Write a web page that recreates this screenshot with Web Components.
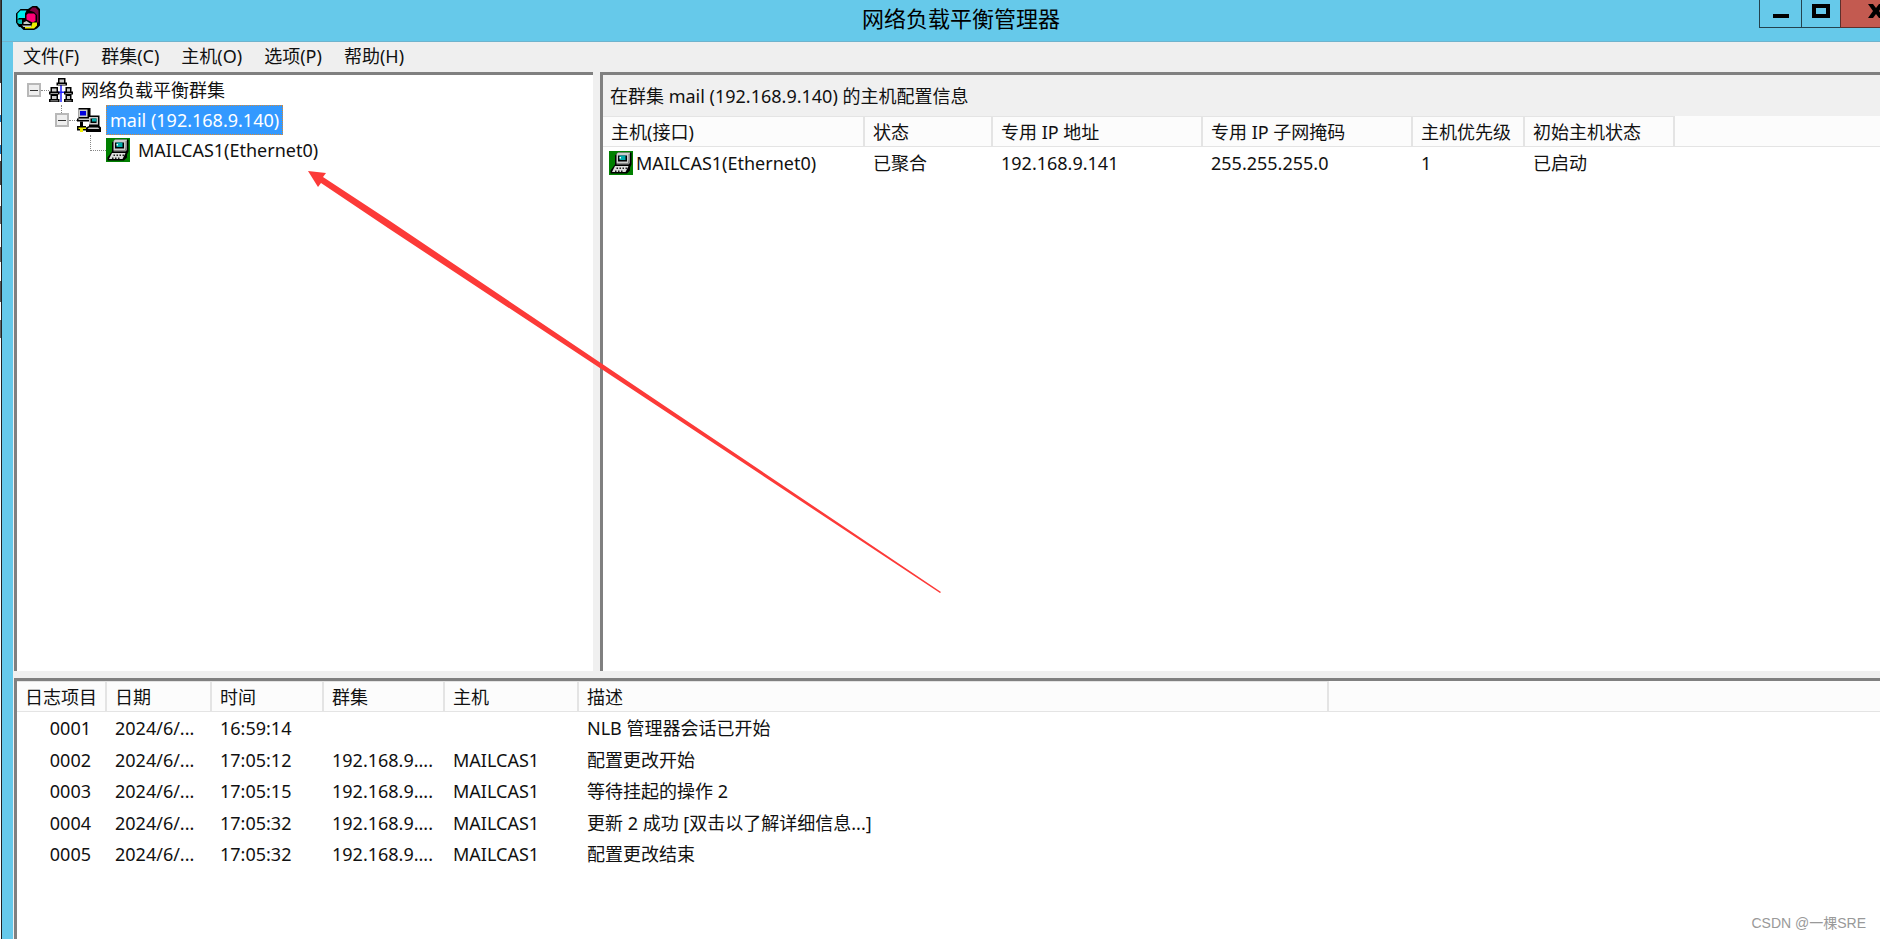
<!DOCTYPE html>
<html lang="zh-CN">
<head>
<meta charset="utf-8">
<title>网络负载平衡管理器</title>
<style>
    html, body {
        height: 100%;
        margin: 0;
    }

    body {
        overflow: hidden;
        position: relative;
        font: 18px/24px "Noto Sans", "Noto Sans CJK SC", sans-serif;
        color: #111;
    }
</style>
</head>
<body>
<nlb-window></nlb-window>

<script>
const ICONS = {
    app: `
        <path fill="#000" d="M11 0h3l2 2v11l-2 2-2 1H5l-2-2H2l-2-3V5l3-3h5z"/>
        <path fill="#800040" d="M11 1h2l2 2v8h-1V6l-2-2-3-1z"/>
        <path fill="#0ee" d="M3 3h4l-1 2v3H2L1 9V5z"/>
        <path fill="#0bb" d="M1 9h3v3H2l-1-1z"/>
        <path fill="#f07" d="M8 5h4l1 1v4l-2 1-4-2V6z"/>
        <path fill="#ccc" d="M5 11l2-1 3 2H5zM4 13h6v1H5z"/>
        <path fill="#ee0" d="M11 11h3v2l-2 2H6v-1h4z"/>`,
    network: `
        <path fill="none" stroke="#22f" d="M8 4v12M4 9.500h8"/>
        <path fill="#000" d="M6 0h5v3h1v2H5V3h1zM1 6h5v3h1v2H0V9h1zM11 6h4v3h1v2h-6V9h1zM1 11h5v3h1v2H0v-2h1zM11 11h4v3h1v2h-6v-2h1z"/>
        <path fill="#ccc" d="M7 1h3v2H7zM2 7h3v2H2zM12 7h2v2h-2zM2 12h3v2H2zM12 12h2v2h-2zM6 4h5v.500H6zM1 10h5v.500H1zM11 10h4v.500h-4zM1 15h5v.500H1zM11 15h4v.500h-4z"/>`,
    cluster: `
        <path fill="#000" d="M1 0h8v6h1v3H0V7h1z"/>
        <path fill="#ccc" d="M1 1h6v5H1zM1 7h7v1H1z"/>
        <path fill="#00d" d="M2 2h4v3H2z"/>
        <path fill="#000" d="M8 5h7v7l1 1v3H6v-3l2-1z"/>
        <path fill="#ccc" d="M8 6h6v5H8zM8 13h6l1 1H7z"/>
        <path fill="#000" d="M9 7h4v3H9z"/>
        <path fill="#0aa" d="M10 7h3v2h-3z"/>
        <path fill="#000" d="M2 9h2v3h2v3H4v1H2v-1H0v-3h2z"/>
        <path fill="#ee0" d="M1 13h5v1H4v2H2v-2H1z"/>`,
    host: `
        <path fill="#008000" d="M0 0h16v16H0z"/>
        <path fill="#000" d="M6 1h9v8l-1 2v2l-2 2H1v-2l3-4V3z"/>
        <path fill="#ccc" d="M6 1h8l-1 7H5V2z"/>
        <path fill="#888" d="M13 2h1v6l-1 1H5V8h8z"/>
        <path fill="#000" d="M6 3h6v4H6z"/>
        <path fill="#0aa" d="M7 3h4v3H7z"/>
        <path fill="#fff" d="M7 4h1v1H7z"/>
        <path fill="#ddd" d="M4 10h9l-2 4H2z"/>
        <path fill="#222" d="M5 11h1v1H5zM7 11h1v1H7zM9 11h1v1H9zM11 11h1v1h-1zM4 13h1v1H4zM6 13h1v1H6zM8 13h1v1H8z"/>`
};

class NlbIcon extends HTMLElement {
    constructor() {
        super();
        this.attachShadow({ mode: 'open' });
    }

    connectedCallback() {
        this.shadowRoot.innerHTML = `
        <style>
            :host {
                display: block;
                flex: none;
                width: 24px;
                height: 24px;
            }

            svg {
                display: block;
            }
        </style>
        <svg width="24" height="24" viewBox="0 0 16 16" aria-hidden="true">${ICONS[this.getAttribute('name')]}</svg>
        `;
    }
}

class NlbTitleBar extends HTMLElement {
    constructor() {
        super();
        this.attachShadow({ mode: 'open' });
        this.shadowRoot.innerHTML = `
        <style>
            :host {
                display: grid;
                grid-template-columns: 1fr auto 1fr;
                height: 42px;
                border-bottom: 1px solid #6fb3cd;
                box-sizing: border-box;
                color: #000;
            }

            nlb-icon {
                margin: 6px 0 0 14px;
            }

            h1 {
                margin: 0;
                font-size: 22px;
                font-weight: 400;
                line-height: 36px;
            }

            .controls {
                display: flex;
                justify-self: end;
                height: 28px;
                margin-right: 10px;
            }

            button {
                width: 42px;
                padding: 0;
                border: 1px solid #23424e;
                border-width: 0 0 1px 1px;
                background: transparent;
            }

            .maximize {
                width: 39px;
            }

            .close {
                width: 70px;
                border-color: #5d302c;
                background: #c35a50;
            }

            svg {
                display: block;
                margin: 0 auto 7px;
            }
        </style>
        <nlb-icon name="app"></nlb-icon>
        <h1><slot></slot></h1>
        <div class="controls">
            <button type="button" aria-label="最小化">
                <svg width="16" height="16"><path d="M0 12h16v4H0z"/></svg>
            </button>
            <button class="maximize" type="button" aria-label="最大化">
                <svg width="18" height="16"><path fill-rule="evenodd" d="M0 2h18v14H0zM4 6v6h10V6z"/></svg>
            </button>
            <button class="close" type="button" aria-label="关闭">
                <svg width="16" height="16"><path d="M0 2h5l3 4 3-4h5l-5 7 5 7h-5l-3-4-3 4H0l5-7z"/></svg>
            </button>
        </div>
        `;
    }
}

class NlbMenu extends HTMLElement {
    constructor() {
        super();
        this.attachShadow({ mode: 'open' });
        const items = ['文件(F)', '群集(C)', '主机(O)', '选项(P)', '帮助(H)'];

        this.shadowRoot.innerHTML = `
        <style>
            :host {
                display: block;
                background: #efefef;
            }

            nav {
                display: flex;
                gap: 22px;
                height: 30px;
                padding-left: 10px;
            }

            button {
                padding: 0 0 2px;
                border: 0;
                background: transparent;
                font: inherit;
                line-height: 28px;
                color: inherit;
            }
        </style>
        <nav>${items.map((item) => `<button type="button">${item}</button>`).join('')}</nav>
        `;
    }
}

class NlbTree extends HTMLElement {
    constructor() {
        super();
        this.attachShadow({ mode: 'open' });
        this.shadowRoot.innerHTML = `
        <style>
            :host {
                display: block;
            }

            ul {
                margin: 0;
                padding: 0;
                list-style: none;
            }

            ul ul {
                padding-left: 28px;
            }

            .row {
                display: flex;
                align-items: center;
                height: 30px;
            }

            .toggle {
                width: 14px;
                height: 14px;
                padding: 0;
                margin-left: 10px;
                border: 2px solid #b8b8b8;
                background: #eee;
            }

            .toggle::before {
                content: "";
                display: block;
                height: 1px;
                margin: 0 1px;
                background: #333;
            }

            .dots {
                width: 8px;
                border-top: 1px dotted #888;
            }

            .elbow {
                width: 16px;
                height: 16px;
                margin: 0 0 15px 17px;
                border: 1px dotted #888;
                border-width: 0 0 1px 1px;
                box-sizing: border-box;
            }

            .stem {
                width: 0;
                height: 8px;
                margin: 0 0 -8px 16px;
                border-left: 1px dotted #888;
            }

            .name {
                padding: 0 3px;
                margin-left: 5px;
                line-height: 28px;
                white-space: nowrap;
            }

            .selected {
                border: 1px dotted #d88a35;
                background: #39f;
                color: #fff;
            }
        </style>
        <ul role="tree" aria-label="群集">
            <li role="treeitem" aria-expanded="true">
                <div class="row">
                    <button class="toggle" type="button" aria-label="折叠"></button>
                    <span class="dots"></span>
                    <nlb-icon name="network"></nlb-icon>
                    <span class="name">网络负载平衡群集</span>
                </div>
                <ul role="group">
                    <li role="treeitem" aria-expanded="true" aria-selected="true">
                        <div class="stem"></div>
                        <div class="row">
                            <button class="toggle" type="button" aria-label="折叠"></button>
                            <span class="dots"></span>
                            <nlb-icon name="cluster"></nlb-icon>
                            <span class="name selected">mail (192.168.9.140)</span>
                        </div>
                        <ul role="group">
                            <li role="treeitem">
                                <div class="row">
                                    <span class="elbow"></span>
                                    <nlb-icon name="host"></nlb-icon>
                                    <span class="name">MAILCAS1(Ethernet0)</span>
                                </div>
                            </li>
                        </ul>
                    </li>
                </ul>
            </li>
        </ul>
        `;
    }
}

class NlbTable extends HTMLElement {
    constructor() {
        super();
        this.attachShadow({ mode: 'open' });
        this._columns = [];
        this._rows = [];
    }

    set data(value) {
        this._columns = value.columns;
        this._rows = value.rows;
        this.render();
    }

    connectedCallback() {
        this.render();
    }

    render() {
        // the last, unsized column takes the rest of the width
        const cols = this._columns.map((column) => `<col style="width: ${column.width}px">`).join('');
        const heads = this._columns.map((column) => `<th scope="col">${column.label}</th>`).join('');
        const rows = this._rows.map((row) => `<tr>${row.map((cell) => `<td><span class="cell">${cell}</span></td>`).join('')}<td></td></tr>`).join('');

        this.shadowRoot.innerHTML = `
        <style>
            :host {
                display: block;
            }

            table {
                width: 100%;
                table-layout: fixed;
                border-collapse: separate;
                border-spacing: 0;
            }

            th {
                height: 31px;
                padding: 0 0 0 8px;
                border: 1px solid #e4e4e4;
                border-width: 1px 2px 1px 0;
                box-sizing: border-box;
                background: #fcfcfc;
                font-weight: 400;
                line-height: 26px;
                text-align: left;
                white-space: nowrap;
            }

            thead td {
                height: 31px;
                background: #fcfcfc;
                border-bottom: 1px solid #e4e4e4;
                box-sizing: border-box;
            }

            td {
                height: 32px;
                padding: 0 0 0 8px;
                white-space: nowrap;
            }

            .cell {
                display: flex;
                align-items: center;
                gap: 3px;
            }

            tbody td:has(nlb-icon) {
                padding-left: 6px;
            }

            :host([numbered]) tbody td {
                height: 31px;
            }

            :host([numbered]) tbody tr:nth-child(odd) td {
                height: 32px;
            }

            :host([numbered]) tbody td:first-child {
                padding: 0 16px 0 0;
            }

            :host([numbered]) tbody td:first-child .cell {
                justify-content: flex-end;
            }
        </style>
        <table>
            <colgroup>${cols}<col></colgroup>
            <thead><tr>${heads}<td></td></tr></thead>
            <tbody>${rows}</tbody>
        </table>
        `;
    }
}

class NlbPane extends HTMLElement {
    constructor() {
        super();
        this.attachShadow({ mode: 'open' });
        this.shadowRoot.innerHTML = `
        <style>
            :host {
                display: block;
                box-sizing: border-box;
                min-width: 0;
                overflow: hidden;
                border: 3px solid #808080;
                border-width: 3px 0 0 3px;
                background: #fff;
            }
        </style>
        <slot></slot>
        `;
    }
}

class NlbArrow extends HTMLElement {
    constructor() {
        super();
        this.attachShadow({ mode: 'open' });
        this.shadowRoot.innerHTML = `
        <style>
            :host {
                display: block;
                position: absolute;
                left: 308px;
                top: 170px;
                pointer-events: none;
            }

            svg {
                display: block;
            }
        </style>
        <svg width="634" height="424" aria-hidden="true">
            <path fill="#fc3a38" d="M0 1l18 2-3 4 67 44 551 371-1 1L80 58 13 13l-3 4z"/>
        </svg>
        `;
    }
}

class NlbWindow extends HTMLElement {
    constructor() {
        super();
        this.attachShadow({ mode: 'open' });
        this.shadowRoot.innerHTML = `
        <style>
            :host {
                display: flex;
                height: 100%;
                overflow: hidden;
            }

            .desktop {
                flex: none;
                width: 1px;
                border-right: 1px solid #222;
                background: linear-gradient(#444 83px, #fff 83px 115px, #17b 115px 122px,
                    #fff 122px 145px, #17b 145px 154px, #fff 154px 161px, #444 161px 185px,
                    #fff 185px 206px, #666 206px 224px, #fff 224px 247px, #666 247px 262px,
                    #fff 262px 281px, #555 281px 302px, #fff 302px 320px, #666 320px 338px, #fff 338px);
            }

            /* the window runs past the right edge of the screen */
            .frame {
                flex: none;
                display: flex;
                flex-direction: column;
                width: calc(100% + 38px);
                background: #66c9ea;
            }

            .client {
                flex: 1;
                display: flex;
                flex-direction: column;
                gap: 7px;
                min-height: 0;
                margin: 0 11px;
                background: #f0f0f0;
            }

            .top {
                flex: 1;
                display: flex;
                flex-direction: column;
                min-height: 0;
            }

            .panes {
                flex: 1;
                display: grid;
                grid-template-columns: 579px 1fr;
                gap: 7px;
                min-height: 0;
                padding-left: 1px;
            }

            .log {
                flex: none;
                height: 261px;
                margin-left: 1px;
            }

            h2 {
                margin: 0;
                padding: 1px 0 0 7px;
                background: #f0f0f0;
                font-size: 18px;
                font-weight: 400;
                line-height: 40px;
            }

            .watermark {
                position: absolute;
                right: 14px;
                bottom: 4px;
                font: 14px/24px "Liberation Sans", "Noto Sans CJK SC", sans-serif;
                color: #999;
            }
        </style>
        <div class="desktop"></div>
        <div class="frame">
            <nlb-title-bar>网络负载平衡管理器</nlb-title-bar>
            <div class="client">
                <div class="top">
                    <nlb-menu></nlb-menu>
                    <div class="panes">
                        <nlb-pane><nlb-tree></nlb-tree></nlb-pane>
                        <nlb-pane>
                            <h2>在群集 mail (192.168.9.140) 的主机配置信息</h2>
                            <nlb-table class="hosts"></nlb-table>
                        </nlb-pane>
                    </div>
                </div>
                <nlb-pane class="log"><nlb-table class="entries" numbered></nlb-table></nlb-pane>
            </div>
        </div>
        <nlb-arrow></nlb-arrow>
        <div class="watermark">CSDN @一棵SRE</div>
        `;

        customElements.upgrade(this.shadowRoot);

        this.shadowRoot.querySelector('.hosts').data = {
            columns: [
                { label: '主机(接口)', width: 262 },
                { label: '状态', width: 128 },
                { label: '专用 IP 地址', width: 210 },
                { label: '专用 IP 子网掩码', width: 210 },
                { label: '主机优先级', width: 112 },
                { label: '初始主机状态', width: 150 }
            ],
            rows: [
                ['<nlb-icon name="host"></nlb-icon>MAILCAS1(Ethernet0)', '已聚合', '192.168.9.141', '255.255.255.0', '1', '已启动']
            ]
        };

        this.shadowRoot.querySelector('.entries').data = {
            columns: [
                { label: '日志项目', width: 90 },
                { label: '日期', width: 105 },
                { label: '时间', width: 112 },
                { label: '群集', width: 121 },
                { label: '主机', width: 134 },
                { label: '描述', width: 750 }
            ],
            rows: [
                ['0001', '2024/6/...', '16:59:14', '', '', 'NLB 管理器会话已开始'],
                ['0002', '2024/6/...', '17:05:12', '192.168.9....', 'MAILCAS1', '配置更改开始'],
                ['0003', '2024/6/...', '17:05:15', '192.168.9....', 'MAILCAS1', '等待挂起的操作 2'],
                ['0004', '2024/6/...', '17:05:32', '192.168.9....', 'MAILCAS1', '更新 2 成功 [双击以了解详细信息...]'],
                ['0005', '2024/6/...', '17:05:32', '192.168.9....', 'MAILCAS1', '配置更改结束']
            ]
        };
    }
}

customElements.define('nlb-icon', NlbIcon);
customElements.define('nlb-title-bar', NlbTitleBar);
customElements.define('nlb-menu', NlbMenu);
customElements.define('nlb-tree', NlbTree);
customElements.define('nlb-table', NlbTable);
customElements.define('nlb-pane', NlbPane);
customElements.define('nlb-arrow', NlbArrow);
customElements.define('nlb-window', NlbWindow);
</script>
</body>
</html>
